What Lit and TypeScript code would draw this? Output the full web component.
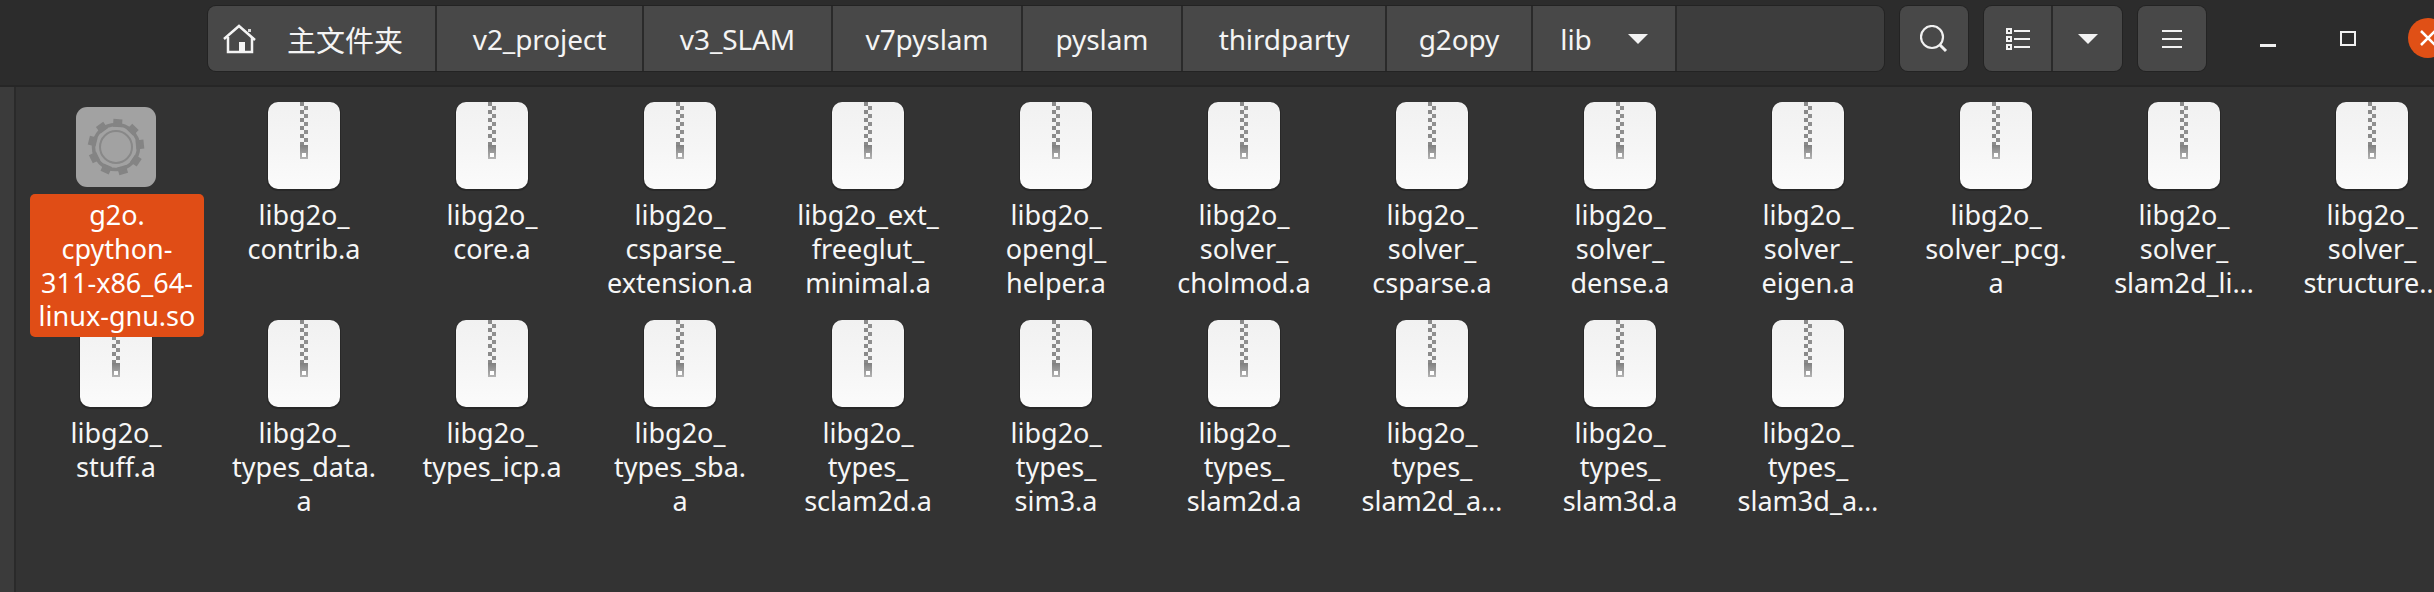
import { LitElement, html, css, svg } from "lit";
import { customElement } from "lit/decorators.js";

const s = "libg2o_";
const files: string[][] = [
  ["g2o.", "cpython-", "311-x86_64-", "linux-gnu.so"],
  [s, "contrib.a"],
  [s, "core.a"],
  [s, "csparse_", "extension.a"],
  ["libg2o_ext_", "freeglut_", "minimal.a"],
  [s, "opengl_", "helper.a"],
  [s, "solver_", "cholmod.a"],
  [s, "solver_", "csparse.a"],
  [s, "solver_", "dense.a"],
  [s, "solver_", "eigen.a"],
  [s, "solver_pcg.", "a"],
  [s, "solver_", "slam2d_li…"],
  [s, "solver_", "structure…"],
  [s, "stuff.a"],
  [s, "types_data.", "a"],
  [s, "types_icp.a"],
  [s, "types_sba.", "a"],
  [s, "types_", "sclam2d.a"],
  [s, "types_", "sim3.a"],
  [s, "types_", "slam2d.a"],
  [s, "types_", "slam2d_a…"],
  [s, "types_", "slam3d.a"],
  [s, "types_", "slam3d_a…"],
];

const crumbs: [string, number][] = [
  ["v2_project", 207],
  ["v3_SLAM", 189],
  ["v7pyslam", 190],
  ["pyslam", 160],
  ["thirdparty", 204],
  ["g2opy", 146],
];

const zipCells = Array.from({ length: 11 }, (_, i) =>
  svg`<rect x=${i % 2 ? 4 : 0} y=${i * 4} width="4" height="4" fill=${i % 2 ? "#8f8f8f" : "#8a8a8a"}></rect>`
);

const zipIcon = html`<svg class="zip" width="76" height="92" viewBox="-2 -1 76 92">
  <defs>
    <linearGradient id="pg" x1="0" y1="0" x2="0" y2="1">
      <stop offset="0" stop-color="#f1f1f1"></stop>
      <stop offset="0.55" stop-color="#f6f6f6"></stop>
      <stop offset="1" stop-color="#fbfbfb"></stop>
    </linearGradient>
    <linearGradient id="tab" x1="0" y1="0" x2="0" y2="1">
      <stop offset="0" stop-color="#808080"></stop>
      <stop offset="1" stop-color="#b4b4b4"></stop>
    </linearGradient>
  </defs>
  <rect x="-1" y="0" width="74" height="89" rx="11" fill="#1f1f1f" opacity="0.55"></rect>
  <rect x="0" y="0" width="72" height="87" rx="10" fill="url(#pg)"></rect>
  <g transform="translate(32 0)">${zipCells}
    <rect x="0" y="43" width="8" height="14" fill="url(#tab)"></rect>
    <rect x="2" y="51" width="4" height="4" fill="#fff"></rect>
  </g>
</svg>`;

const teeth = Array.from({ length: 9 }, (_, i) =>
  svg`<rect x="-4.5" y="-28" width="9" height="8" fill="#848484" transform="rotate(${i * 40 + 4})"></rect>`
);

const gearIcon = html`<svg class="gear" width="80" height="80" viewBox="-40 -40 80 80">
  <rect x="-40" y="-40" width="80" height="80" rx="11" fill="#a2a2a2"></rect>
  ${teeth}
  <circle r="22.5" fill="none" stroke="#848484" stroke-width="3.5"></circle>
  <circle r="16" fill="none" stroke="#888888" stroke-width="2"></circle>
</svg>`;

const tri = html`<svg class="tri" width="20" height="10" viewBox="0 0 20 10"><path d="M0 0H20L10 10Z" fill="#f2f2f2"></path></svg>`;

@customElement("app-root")
export class AppRoot extends LitElement {
  static styles = css`
    :host {
      display: block;
      width: 2434px;
      height: 592px;
      overflow: hidden;
      background: #333333;
      font-family: "Noto Sans", "Noto Sans CJK SC", sans-serif;
      color: #f4f4f4;
    }
    .bar {
      height: 87px;
      box-sizing: border-box;
      background: #2c2c2c;
      border-bottom: 2px solid #262626;
      display: flex;
      align-items: flex-start;
      padding: 6px 0 0 208px;
      position: relative;
      overflow: hidden;
    }
    .group {
      display: flex;
      height: 65px;
      border-radius: 8px;
      overflow: hidden;
      box-shadow: 0 0 0 1px #232323;
      flex: none;
    }
    .seg {
      background: #484848;
      display: flex;
      align-items: center;
      justify-content: center;
      box-sizing: border-box;
      border-right: 2px solid #2a2a2a;
      font-size: 28px;
      letter-spacing: -0.1px;
      white-space: nowrap;
      flex: none;
    }
    .seg:last-child { border-right: 0; }
    .home { width: 229px; justify-content: flex-start; padding-left: 15px; gap: 30px; }
    .home span { font-size: 29px; font-family: "Noto Sans CJK SC", sans-serif; letter-spacing: 0; }
    .lib { width: 144px; gap: 36px; padding-left: 0; }
    .rest { width: 207px; background: #3d3d3d; }
    .path { width: 1676px; }
    .search { width: 68px; margin-left: 16px; }
    .view { margin-left: 16px; }
    .v1 { width: 69px; }
    .v2 { width: 69px; }
    .menu { margin-left: 16px; }
    .menu .seg { width: 68px; }
    .wm { display: flex; align-items: center; height: 65px; margin-left: 54px; flex: none; }
    .min { width: 16px; height: 2.5px; background: #f0f0f0; margin-top: 14px; }
    .max { width: 16px; height: 15px; border: 2.5px solid #f0f0f0; box-sizing: border-box; margin-left: 64px; margin-top: -1px; }
    .close {
      width: 40px;
      height: 40px;
      border-radius: 50%;
      background: #e05016;
      margin-left: 52px;
      margin-top: -1px;
      flex: none;
      display: flex;
      align-items: center;
      justify-content: center;
    }
    .body { display: flex; height: 505px; }
    .side { width: 14px; background: #3b3b3b; border-right: 2px solid #2a2a2a; flex: none; }
    .grid {
      padding: 15px 0 0 6px;
      display: grid;
      grid-template-columns: repeat(13, 188px);
      grid-auto-rows: 218px;
      justify-content: start;
      flex: none;
      align-content: start;
    }
    .item { display: flex; flex-direction: column; align-items: center; }
    .ic { height: 90px; display: flex; align-items: center; justify-content: center; flex: none; }
    .label {
      font-size: 27px;
      line-height: 33.75px;
      text-align: center;
      white-space: nowrap;
      color: #f6f6f6;
      margin-top: 3px;
      padding: 3px 5px;
      border-radius: 5px;
      position: relative;
      z-index: 2;
    }
    .sel {
      background: #e04d16;
      color: #fff;
      width: 174px;
      box-sizing: border-box;
      padding: 4px 0;
      margin-top: 2px;
      margin-left: 2px;
    }
    .line { display: block; }
  `;

  render() {
    return html`
      <div class="bar">
        <div class="group path">
          <div class="seg home">
            <svg width="34" height="30" viewBox="0 0 34 30" fill="none" stroke="#f4f4f4" stroke-width="2.5">
              <path d="M1 15L16 2L32 16"></path>
              <path d="M5 13V28H29V13"></path>
              <rect x="16" y="18" width="6" height="10" fill="#f4f4f4" stroke="none"></rect>
              <rect x="25" y="5" width="3" height="3" fill="#d8d8d8" stroke="none"></rect>
            </svg>
            <span>主文件夹</span>
          </div>
          ${crumbs.map(([t, w]) => html`<div class="seg" style="width:${w}px">${t}</div>`)}
          <div class="seg lib"><span>lib</span>${tri}</div>
          <div class="seg rest"></div>
        </div>
        <div class="group search">
          <div class="seg" style="width:68px">
            <svg width="28" height="28" viewBox="0 0 28 28" fill="none" stroke="#f0f0f0" stroke-width="2.2">
              <circle cx="12" cy="12" r="11"></circle>
              <path d="M20 20L26 26" stroke-width="3"></path>
            </svg>
          </div>
        </div>
        <div class="group view">
          <div class="seg v1">
            <svg width="24" height="22" viewBox="0 0 24 22" fill="none" stroke="#f2f2f2" stroke-width="2">
              <rect x="1" y="1" width="4" height="4"></rect>
              <rect x="1" y="9" width="4" height="4"></rect>
              <rect x="1" y="17" width="4" height="4"></rect>
              <path d="M8 3H24M8 11H24M8 19H24"></path>
            </svg>
          </div>
          <div class="seg v2">${tri}</div>
        </div>
        <div class="group menu">
          <div class="seg">
            <svg width="20" height="20" viewBox="0 0 20 20" stroke="#f2f2f2" stroke-width="2">
              <path d="M0 2H20M0 10H20M0 18H20"></path>
            </svg>
          </div>
        </div>
        <div class="wm">
          <div class="min"></div>
          <div class="max"></div>
          <div class="close">
            <svg width="16" height="16" viewBox="0 0 16 16" stroke="#fff" stroke-width="2.5">
              <path d="M1 1L15 15M15 1L1 15"></path>
            </svg>
          </div>
        </div>
      </div>
      <div class="body">
        <div class="side"></div>
        <div class="grid">
          ${files.map(
            (lines, i) => html`<div class="item">
              <div class="ic">${i === 0 ? gearIcon : zipIcon}</div>
              <div class="label ${i === 0 ? "sel" : ""}">
                ${lines.map((l) => html`<span class="line">${l}</span>`)}
              </div>
            </div>`
          )}
        </div>
      </div>
    `;
  }
}
